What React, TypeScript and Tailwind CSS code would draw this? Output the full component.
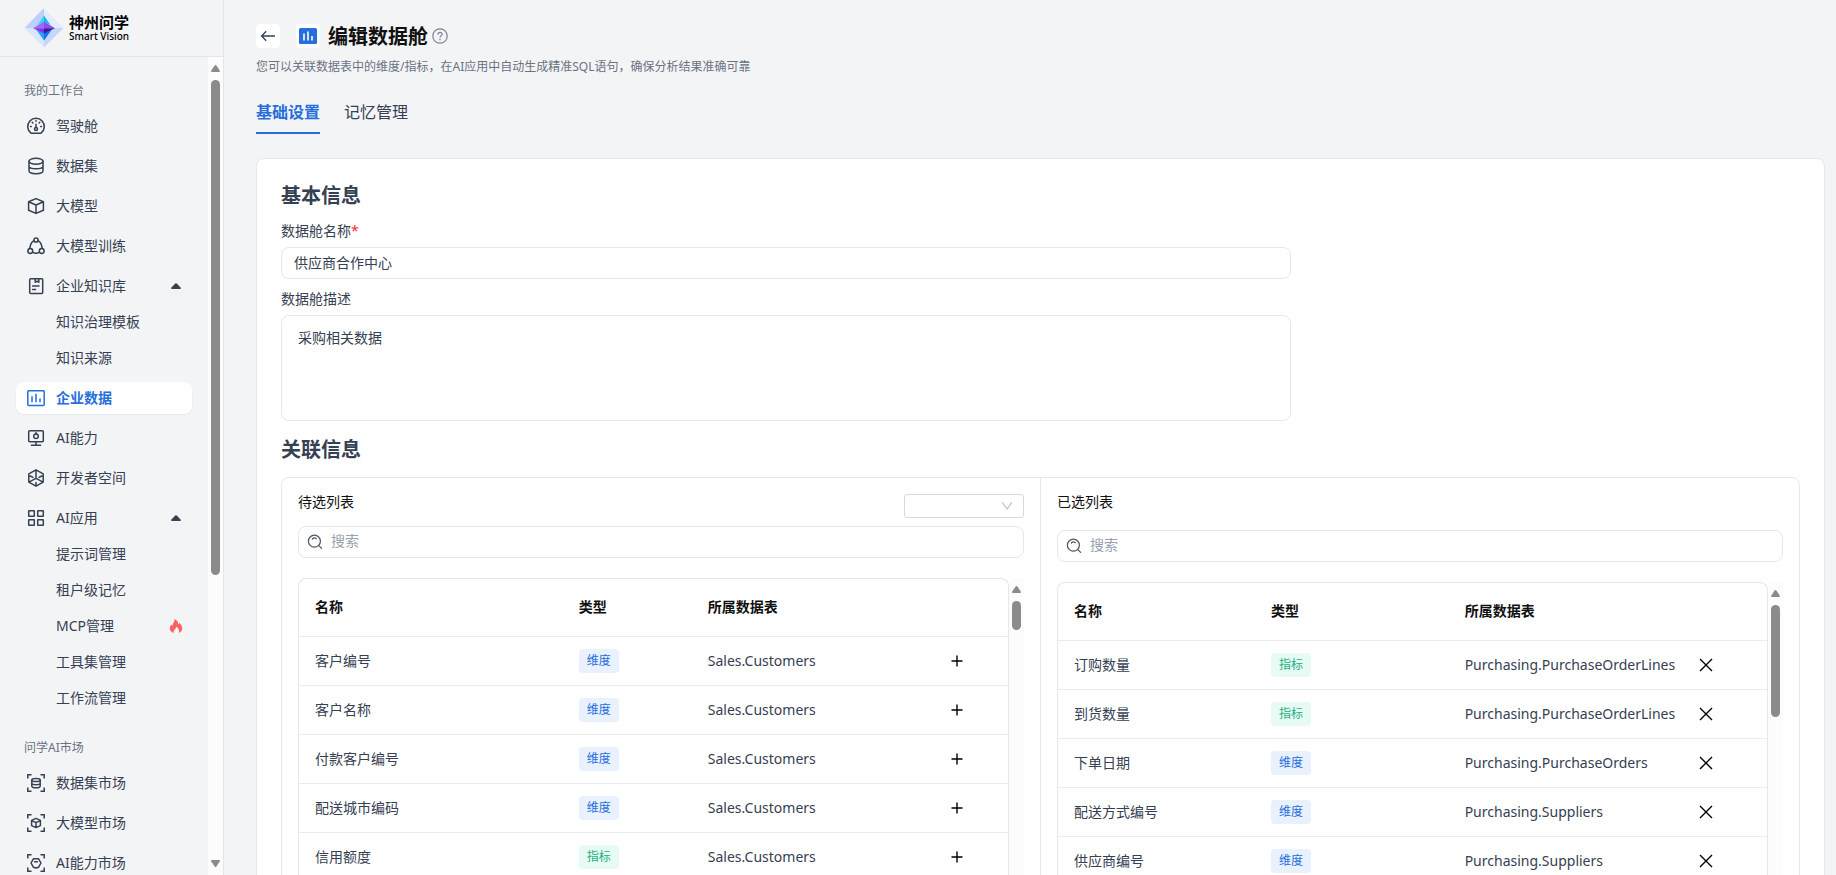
import type { ReactNode } from "react";

type FieldRow = {
  name: string;
  kind: "维度" | "指标";
  table: string;
};

type NavEntry = {
  label: string;
  icon?: ReactNode;
  active?: boolean;
  open?: boolean;
  hot?: boolean;
};

const candidateRows: FieldRow[] = [
  { name: "客户编号", kind: "维度", table: "Sales.Customers" },
  { name: "客户名称", kind: "维度", table: "Sales.Customers" },
  { name: "付款客户编号", kind: "维度", table: "Sales.Customers" },
  { name: "配送城市编码", kind: "维度", table: "Sales.Customers" },
  { name: "信用额度", kind: "指标", table: "Sales.Customers" },
];

const selectedRows: FieldRow[] = [
  { name: "订购数量", kind: "指标", table: "Purchasing.PurchaseOrderLines" },
  { name: "到货数量", kind: "指标", table: "Purchasing.PurchaseOrderLines" },
  { name: "下单日期", kind: "维度", table: "Purchasing.PurchaseOrders" },
  { name: "配送方式编号", kind: "维度", table: "Purchasing.Suppliers" },
  { name: "供应商编号", kind: "维度", table: "Purchasing.Suppliers" },
];

function NavIcon({ children }: { children: ReactNode }) {
  return (
    <svg
      viewBox="0 0 20 20"
      className="h-5 w-5 shrink-0"
      fill="none"
      stroke="currentColor"
      strokeWidth="1.5"
      strokeLinecap="round"
      strokeLinejoin="round"
      aria-hidden="true"
    >
      {children}
    </svg>
  );
}

function ScanCorners() {
  return (
    <path
      d="M1.8 5.5V1.8H5.5M14.5 1.8H18.2V5.5M18.2 14.5V18.2H14.5M5.5 18.2H1.8V14.5"
      strokeLinecap="butt"
      strokeLinejoin="miter"
    />
  );
}

const gaugeIcon = (
  <NavIcon>
    <path d="M5 17.2A8.3 8.3 0 1 1 15 17.2Z" />
    <circle cx="10" cy="13" r="1.5" />
    <path d="M10 11.4V8.2M10 4.4V5.3M6.2 6.3L6.8 6.9M13.8 6.3L13.2 6.9M4.5 10.6H5.3M14.7 10.6H15.5" />
  </NavIcon>
);

const databaseIcon = (
  <NavIcon>
    <ellipse cx="10" cy="5.2" rx="7" ry="3" />
    <path d="M3 5.2V14.8C3 16.6 6 17.7 10 17.7S17 16.6 17 14.8V5.2M3 10C3 11.8 6 12.8 10 12.8S17 11.8 17 10" />
  </NavIcon>
);

const cubeIcon = (
  <NavIcon>
    <path d="M10 2.6L17.4 5.8V14.2L10 17.4L2.6 14.2V5.8ZM2.6 5.8L10 9L17.4 5.8M10 9V17.4" />
  </NavIcon>
);

const trainIcon = (
  <NavIcon>
    <circle cx="10" cy="4" r="2.1" />
    <circle cx="4.3" cy="15" r="2.4" />
    <circle cx="15.7" cy="15" r="2.4" />
    <path d="M7.9 4.7C5.4 6.2 4 9 4 12.6M12.1 4.7C14.6 6.2 16 9 16 12.6M6.7 16.4C8.8 17.5 11.2 17.5 13.3 16.4" />
  </NavIcon>
);

const bookIcon = (
  <NavIcon>
    <rect x="3.7" y="2.7" width="13" height="14.8" rx="1" />
    <path d="M9.2 2.7V6.3L11 5.2L12.8 6.3V2.7M6.6 10H13M6.6 13.6H9.6" />
  </NavIcon>
);

const barsIcon = (
  <NavIcon>
    <rect x="1.8" y="2.8" width="16.4" height="14.6" rx="0.8" />
    <path d="M6 8.2V14.2M10 5.8V14.2M14 10.6V14.2" strokeLinecap="butt" />
  </NavIcon>
);

const screenIcon = (
  <NavIcon>
    <rect x="2.7" y="2.7" width="14.6" height="11" rx="1" />
    <circle cx="10" cy="8.2" r="2.3" />
    <path d="M10 4.4V5.9M10 13.7V17M5.4 17.2H14.6" />
  </NavIcon>
);

const devIcon = (
  <NavIcon>
    <path d="M10 1.8L17.2 5.9V14.1L10 18.2L2.8 14.1V5.9ZM10 3V10.4L3.8 13.6M10 10.4L16.2 13.6M4.2 8L7 9.4M15.8 8L13 9.4M10 14.6V17.2" />
  </NavIcon>
);

const appsIcon = (
  <NavIcon>
    <rect x="2.7" y="2.7" width="5.6" height="5.6" rx="0.4" />
    <rect x="11.7" y="2.7" width="5.6" height="5.6" rx="0.4" />
    <rect x="2.7" y="11.7" width="5.6" height="5.6" rx="0.4" />
    <rect x="11.7" y="11.7" width="5.6" height="5.6" rx="0.4" />
  </NavIcon>
);

const dataMarketIcon = (
  <NavIcon>
    <ScanCorners />
    <ellipse cx="10" cy="7" rx="4.2" ry="1.6" />
    <path d="M5.8 7V13C5.8 14 7.7 14.8 10 14.8S14.2 14 14.2 13V7M5.8 10C5.8 11 7.7 11.7 10 11.7S14.2 11 14.2 10" />
  </NavIcon>
);

const modelMarketIcon = (
  <NavIcon>
    <ScanCorners />
    <path d="M10 5.4L14.4 7.4V12.6L10 14.6L5.6 12.6V7.4ZM5.6 7.6L10 9.6L14.4 7.6M10 9.6V14.6" />
  </NavIcon>
);

const abilityMarketIcon = (
  <NavIcon>
    <ScanCorners />
    <path d="M7.4 5.8H12.6L15 10L12.6 14.2L10 15L7.4 14.2L5 10ZM8.6 8.8H11.4" />
  </NavIcon>
);

const workspaceNav: NavEntry[] = [
  { label: "驾驶舱", icon: gaugeIcon },
  { label: "数据集", icon: databaseIcon },
  { label: "大模型", icon: cubeIcon },
  { label: "大模型训练", icon: trainIcon },
  { label: "企业知识库", icon: bookIcon, open: true },
  { label: "知识治理模板" },
  { label: "知识来源" },
  { label: "企业数据", icon: barsIcon, active: true },
  { label: "AI能力", icon: screenIcon },
  { label: "开发者空间", icon: devIcon },
  { label: "AI应用", icon: appsIcon, open: true },
  { label: "提示词管理" },
  { label: "租户级记忆" },
  { label: "MCP管理", hot: true },
  { label: "工具集管理" },
  { label: "工作流管理" },
];

const marketNav: NavEntry[] = [
  { label: "数据集市场", icon: dataMarketIcon },
  { label: "大模型市场", icon: modelMarketIcon },
  { label: "AI能力市场", icon: abilityMarketIcon },
];

function Flame() {
  return (
    <svg viewBox="0 0 14 16" className="h-4 w-3.5" fill="#ff5f5f" aria-hidden="true">
      <path d="M5.6 1C8.6 2.4 9.4 4.6 9.1 6.6C9.8 6.3 10.2 5.6 10.3 4.8C12.2 6.6 13.4 8.6 13.2 10.8C13 12.7 11.8 14.1 9.8 14.9C10.6 12.8 9.6 10.6 7.3 8.6C7.2 10.2 6.4 10.8 5.5 11.7C4.6 12.7 4.4 13.8 4.8 15C2.4 14.2 0.9 12.6 0.8 10.5C0.7 8.6 1.6 7.6 2.4 6.4C2.7 7.2 3 7.6 3.6 7.9C3.5 5.2 5.9 3.9 5.6 1Z" />
    </svg>
  );
}

function Caret() {
  return (
    <svg viewBox="0 0 10 6" className="h-1.5 w-2.5" fill="currentColor" aria-hidden="true">
      <path d="M4.2 0.5Q5 -0.2 5.8 0.5L9.8 4.8Q10.2 6 9 6H1Q-0.2 6 0.2 4.8Z" />
    </svg>
  );
}

function NavList({ entries }: { entries: NavEntry[] }) {
  return (
    <ul>
      {entries.map((entry) => (
        <li key={entry.label} className={entry.icon ? "py-1" : "pb-1"}>
          <a
            href="#"
            className={`flex h-8 items-center rounded-lg pr-2 pl-2.5 text-sm ${
              entry.active
                ? "bg-white font-bold text-[#266edb] shadow-xs"
                : "text-[#354052]"
            }`}
          >
            <span className="mr-2.5 w-5">{entry.icon}</span>
            <span className="flex-1 pb-px">{entry.label}</span>
            <span className="flex w-4 justify-center">
              {entry.open && <Caret />}
              {entry.hot && <Flame />}
            </span>
          </a>
        </li>
      ))}
    </ul>
  );
}

function ScrollArrow({ down = false }: { down?: boolean }) {
  return (
    <svg
      viewBox="0 0 9 7"
      className={`h-[7px] w-[9px] shrink-0 ${down ? "rotate-180" : ""}`}
      fill="#8b8b8b"
      aria-hidden="true"
    >
      <path d="M3.6 0.6Q4.5 -0.5 5.4 0.6L8.9 5.7Q9.2 7 8 7H1Q-0.2 7 0.1 5.7Z" />
    </svg>
  );
}

function ScrollTrack({ thumb, down = false }: { thumb: string; down?: boolean }) {
  return (
    <div className="flex w-[15px] shrink-0 flex-col items-center bg-[#fcfcfc] pt-2 pb-2">
      <ScrollArrow />
      <div className={`mt-2 w-[9px] rounded-full bg-[#8b8b8b] ${thumb}`} />
      {down && (
        <div className="mt-auto">
          <ScrollArrow down />
        </div>
      )}
    </div>
  );
}

function Logo() {
  return (
    <svg viewBox="0 0 40 40" className="h-10 w-10" aria-hidden="true">
      <path d="M20 0L0.5 20H20Z" fill="#bcd0fb" />
      <path d="M20 0L39.5 20H20Z" fill="#e3ecfd" />
      <path d="M20 39.5L0.5 20H20Z" fill="#dbe6fd" />
      <path d="M20 39.5L39.5 20H20Z" fill="#c5d8fb" />
      <path d="M20 7.5L13.5 17L20 14Z" fill="#2fd6f5" />
      <path d="M20 7.5L26.5 17L20 14Z" fill="#19b7f2" />
      <path d="M20 32.5L12.5 22L20 25Z" fill="#22a4f7" />
      <path d="M20 32.5L27.5 22L20 25Z" fill="#1273e6" />
      <path d="M20 13.5L9 20.2H20Z" fill="#a06af8" />
      <path d="M20 13.5L31 20.2H20Z" fill="#8a4df0" />
      <path d="M9 20.2L20 25.6V20.2Z" fill="#7a35ea" />
      <path d="M31 20.2L20 25.6V20.2Z" fill="#42169c" />
    </svg>
  );
}

function Sidebar() {
  return (
    <aside className="flex w-56 shrink-0 flex-col border-r border-[#e3e5e9]">
      <div className="flex h-[57px] shrink-0 items-center border-b border-[#e3e5e9] pl-6">
        <Logo />
        <div className="ml-[5px] text-black">
          <div className="text-[15px] leading-4 font-bold">神州问学</div>
          <div className="text-[10px] leading-3 font-medium">Smart Vision</div>
        </div>
      </div>
      <div className="flex min-h-0 flex-1">
        <nav className="min-w-0 flex-1 overflow-hidden pt-6 pr-4 pl-4">
          <h2 className="pb-[5px] pl-2 text-xs leading-5 text-gray-500">我的工作台</h2>
          <NavList entries={workspaceNav} />
          <h2 className="mt-5 pb-[5px] pl-2 text-xs leading-5 text-gray-500">问学AI市场</h2>
          <NavList entries={marketNav} />
        </nav>
        <ScrollTrack thumb="h-[495px]" down />
      </div>
    </aside>
  );
}

function KindTag({ kind }: { kind: FieldRow["kind"] }) {
  return (
    <span
      className={`inline-flex h-6 w-10 items-center justify-center rounded align-middle text-xs ${
        kind === "维度" ? "bg-[#e9f1ff] text-[#266edb]" : "bg-[#e8faf4] text-[#22b07d]"
      }`}
    >
      {kind}
    </span>
  );
}

function SearchBox({ id }: { id: string }) {
  return (
    <label
      htmlFor={id}
      className="flex h-8 items-center rounded-lg border border-gray-200 bg-white pl-2"
    >
      <svg
        viewBox="0 0 16 16"
        className="h-4 w-4 shrink-0 text-gray-600"
        fill="none"
        stroke="currentColor"
        strokeWidth="1.2"
        strokeLinecap="round"
        aria-hidden="true"
      >
        <circle cx="7.4" cy="7.2" r="6" />
        <path d="M11.8 11.6L14.6 14.4M5.3 5C6.3 3.9 8.2 3.8 9.3 4.7" />
      </svg>
      <input
        id={id}
        type="text"
        placeholder="搜索"
        aria-label="搜索"
        className="ml-2 min-w-0 flex-1 bg-transparent pb-0.5 text-sm text-gray-700 outline-none placeholder:text-gray-400"
      />
    </label>
  );
}

function FieldTable({
  rows,
  action,
  columns,
}: {
  rows: FieldRow[];
  action: "add" | "remove";
  columns: [string, string, string];
}) {
  return (
    <div className="min-w-0 flex-1 overflow-hidden rounded-t-lg border border-b-0 border-gray-200">
      <table className="w-full table-fixed text-left text-sm">
        <thead>
          <tr className="h-[57px] border-b border-[#ebecee] text-[#111]">
            <th className={`px-4 font-bold ${columns[0]}`}>名称</th>
            <th className={`px-4 font-bold ${columns[1]}`}>类型</th>
            <th className={`px-4 font-bold ${columns[2]}`}>所属数据表</th>
            <th aria-label="操作" />
          </tr>
        </thead>
        <tbody>
          {rows.map((row) => (
            <tr key={row.name} className="h-[49px] border-b border-[#ebecee] text-[#354052]">
              <td className="px-4">{row.name}</td>
              <td className="px-4">
                <KindTag kind={row.kind} />
              </td>
              <td className="px-4 whitespace-nowrap">{row.table}</td>
              <td className="px-4">
                <button
                  type="button"
                  aria-label={action === "add" ? "添加" : "移除"}
                  className="block text-black"
                >
                  <svg
                    viewBox="0 0 16 16"
                    className="h-4 w-4"
                    fill="none"
                    stroke="currentColor"
                    strokeWidth="1.4"
                    aria-hidden="true"
                  >
                    {action === "add" ? (
                      <path d="M8 2.5V13.5M2.5 8H13.5" />
                    ) : (
                      <path d="M2 2L14 14M14 2L2 14" />
                    )}
                  </svg>
                </button>
              </td>
            </tr>
          ))}
        </tbody>
      </table>
    </div>
  );
}

function PageHeader() {
  return (
    <header>
      <div className="flex h-6 items-center">
        <button
          type="button"
          aria-label="返回"
          className="flex h-6 w-6 items-center justify-center rounded bg-white text-gray-700"
        >
          <svg
            viewBox="0 0 16 16"
            className="h-4 w-4"
            fill="none"
            stroke="currentColor"
            strokeWidth="1.4"
            aria-hidden="true"
          >
            <path d="M15 8H1.8M6.2 3.2L1.6 8L6.2 12.8" />
          </svg>
        </button>
        <span className="ml-4 flex h-6 w-6 items-center justify-center rounded bg-white">
          <svg viewBox="0 0 18 16" className="h-4 w-[18px]" aria-hidden="true">
            <rect width="18" height="16" rx="1.5" fill="#266edb" />
            <path d="M5 5.5V12.5M9 3.5V12.5M13 8V12.5" stroke="#fff" strokeWidth="1.6" />
          </svg>
        </span>
        <h1 className="ml-2 pt-0.5 text-xl leading-6 font-bold text-[#111]">编辑数据舱</h1>
        <svg
          viewBox="0 0 16 16"
          className="ml-1 h-4 w-4"
          fill="none"
          stroke="#7b8190"
          strokeWidth="1.2"
          aria-hidden="true"
        >
          <circle cx="8" cy="8" r="7.2" />
          <path d="M5.9 6.4C5.9 5 6.8 4.3 8 4.3S10.1 5 10.1 6.2C10.1 7.6 8 7.8 8 9.6" />
          <path d="M8 10.8V12.2" strokeWidth="1.4" />
        </svg>
      </div>
      <p className="mt-2 text-xs leading-[22px] text-gray-500">
        您可以关联数据表中的维度/指标，在AI应用中自动生成精准SQL语句，确保分析结果准确可靠
      </p>
      <div role="tablist" className="mt-[22px] flex gap-6 text-base leading-6">
        <button
          type="button"
          role="tab"
          aria-selected="true"
          className="border-b-2 border-[#266edb] pb-2 font-bold text-[#266edb]"
        >
          基础设置
        </button>
        <button
          type="button"
          role="tab"
          aria-selected="false"
          className="border-b-2 border-transparent pb-2 text-[#354052]"
        >
          记忆管理
        </button>
      </div>
    </header>
  );
}

export default function App() {
  return (
    <div className="flex h-screen overflow-hidden bg-[#f3f4f6] font-['Noto_Sans','Noto_Sans_CJK_SC',sans-serif] text-[#354052]">
      <Sidebar />
      <main className="min-w-0 flex-1 pt-6 pr-[11px] pl-8">
        <PageHeader />
        <section className="mt-6 rounded-lg border border-gray-200 bg-white p-6">
          <h2 className="text-xl leading-[26px] font-bold">基本信息</h2>
          <div className="w-[66.5%] text-sm leading-5">
            <label htmlFor="name" className="mt-3 block">
              数据舱名称<span className="text-red-500">*</span>
            </label>
            <input
              id="name"
              type="text"
              defaultValue="供应商合作中心"
              className="mt-1.5 block h-8 w-full rounded-lg border border-gray-200 px-3 pb-0.5 outline-none"
            />
            <label htmlFor="description" className="mt-2.5 block">
              数据舱描述
            </label>
            <textarea
              id="description"
              defaultValue="采购相关数据"
              className="mt-1.5 block h-[106px] w-full resize-none rounded-lg border border-gray-200 px-4 py-3 outline-none"
            />
          </div>

          <h2 className="mt-4 text-xl leading-[26px] font-bold">关联信息</h2>
          <div className="mt-3.5 flex rounded-lg border border-gray-200">
            <div className="min-w-0 flex-1 border-r border-gray-200 p-4">
              <div className="mb-2 flex h-6 items-start justify-between">
                <h3 className="text-sm leading-4 text-[#111]">待选列表</h3>
                <div className="relative">
                  <select
                    aria-label="数据表"
                    className="h-6 w-[120px] appearance-none rounded-[3px] border border-[#d9d9d9] bg-white"
                  />
                  <svg
                    viewBox="0 0 12 12"
                    className="pointer-events-none absolute top-1.5 right-[11px] h-3 w-3"
                    fill="none"
                    stroke="#bfbfbf"
                    strokeWidth="1.1"
                    aria-hidden="true"
                  >
                    <path d="M1.2 2.4L6 9L10.8 2.4" />
                  </svg>
                </div>
              </div>
              <SearchBox id="candidate-search" />
              <div className="mt-5 flex">
                <FieldTable
                  rows={candidateRows}
                  action="add"
                  columns={["w-[37.2%]", "w-[18.2%]", "w-[34%]"]}
                />
                <ScrollTrack thumb="h-[29px]" />
              </div>
            </div>
            <div className="min-w-0 flex-1 p-4">
              <div className="mb-3 h-6">
                <h3 className="text-sm leading-4 text-[#111]">已选列表</h3>
              </div>
              <SearchBox id="selected-search" />
              <div className="mt-5 flex">
                <FieldTable
                  rows={selectedRows}
                  action="remove"
                  columns={["w-[27.8%]", "w-[27.3%]", "w-[32.9%]"]}
                />
                <ScrollTrack thumb="h-28" />
              </div>
            </div>
          </div>
        </section>
      </main>
    </div>
  );
}
